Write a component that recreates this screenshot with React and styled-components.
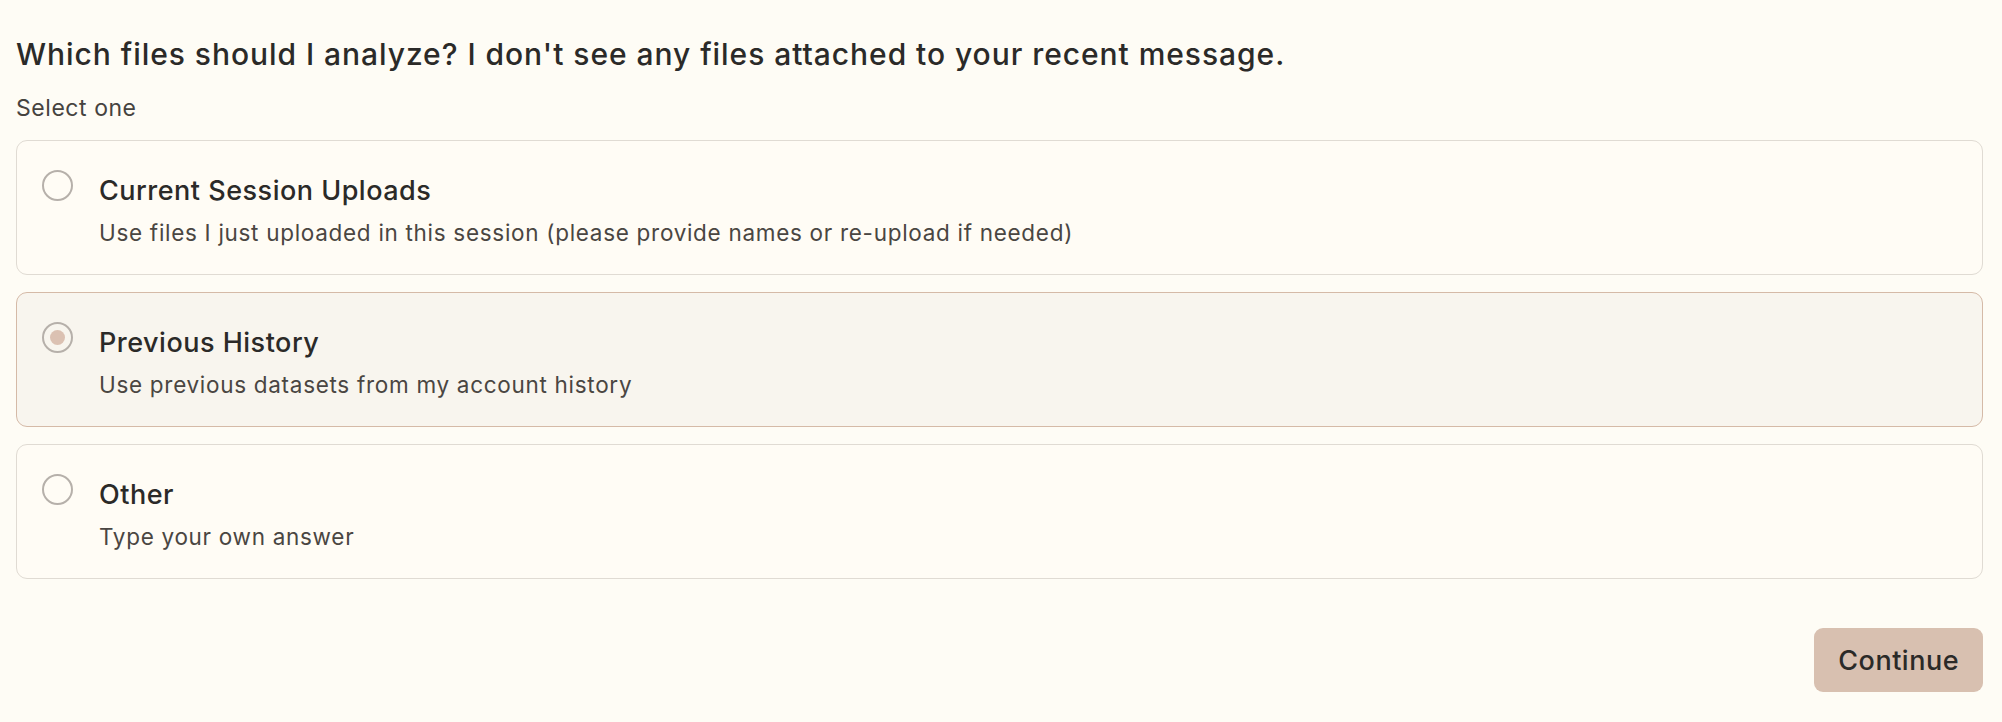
import React, { useState } from "react";
import styled, { createGlobalStyle } from "styled-components";

const Global = createGlobalStyle`
  html, body { margin: 0; padding: 0; background: #fefcf5; }
  body { font-family: Inter, "Noto Sans", sans-serif; color: #2d2b29; }
`;

const Page = styled.div`
  box-sizing: border-box;
  width: 2002px;
  min-height: 722px;
  padding: 34px 19px 30px 16px;
  display: flex;
  flex-direction: column;
`;

const Heading = styled.h1`
  margin: 0;
  font-size: 30px;
  line-height: 40px;
  font-weight: 500;
  color: #2b2a28;
  letter-spacing: 0.95px;
`;

const Hint = styled.div`
  margin-top: 18px;
  font-size: 23px;
  line-height: 32px;
  color: #46433f;
  letter-spacing: 0.55px;
`;

const List = styled.div`
  margin-top: 16px;
  display: flex;
  flex-direction: column;
  gap: 17px;
`;

const Card = styled.label`
  box-sizing: border-box;
  height: 135px;
  display: flex;
  align-items: flex-start;
  gap: 26px;
  padding: 29px 25px 24px 25px;
  border-radius: 11px;
  border: 1.5px solid ${(p) => (p.$selected ? "#d5baa7" : "#e0dbd3")};
  background: ${(p) => (p.$selected ? "#f8f5ee" : "#fffcf5")};
  cursor: pointer;
`;

const Radio = styled.span`
  box-sizing: border-box;
  flex: none;
  width: 31px;
  height: 31px;
  border-radius: 50%;
  border: 2px solid #b6b0aa;
  display: flex;
  align-items: center;
  justify-content: center;
  &::after {
    content: "";
    width: 15px;
    height: 15px;
    border-radius: 50%;
    background: #dbc1b2;
    display: ${(p) => (p.$checked ? "block" : "none")};
  }
`;

const Texts = styled.div`
  display: flex;
  flex-direction: column;
  gap: 8px;
  padding-top: 3px;
`;

const Title = styled.div`
  font-size: 27px;
  line-height: 36px;
  font-weight: 500;
  color: #2b2a28;
  letter-spacing: 0.5px;
`;

const Desc = styled.div`
  font-size: 22.5px;
  line-height: 32px;
  color: #4a4642;
  letter-spacing: 0.7px;
`;

const Footer = styled.div`
  margin-top: 49px;
  display: flex;
  justify-content: flex-end;
`;

const Button = styled.button`
  box-sizing: border-box;
  height: 64px;
  padding: 0 24px;
  border: none;
  border-radius: 9px;
  background: #d8c0b0;
  color: #2b2a28;
  font-family: Inter, "Noto Sans", sans-serif;
  font-size: 27px;
  font-weight: 500;
  letter-spacing: 0.5px;
  cursor: pointer;
`;

const options = [
  {
    title: "Current Session Uploads",
    desc: "Use files I just uploaded in this session (please provide names or re-upload if needed)",
  },
  { title: "Previous History", desc: "Use previous datasets from my account history" },
  { title: "Other", desc: "Type your own answer" },
];

export default function App() {
  const [sel, setSel] = useState(1);
  return (
    <>
      <Global />
      <Page>
        <Heading>Which files should I analyze? I don't see any files attached to your recent message.</Heading>
        <Hint>Select one</Hint>
        <List>
          {options.map((o, i) => (
            <Card key={o.title} $selected={sel === i} onClick={() => setSel(i)}>
              <Radio $checked={sel === i} />
              <Texts>
                <Title>{o.title}</Title>
                <Desc>{o.desc}</Desc>
              </Texts>
            </Card>
          ))}
        </List>
        <Footer>
          <Button>Continue</Button>
        </Footer>
      </Page>
    </>
  );
}
